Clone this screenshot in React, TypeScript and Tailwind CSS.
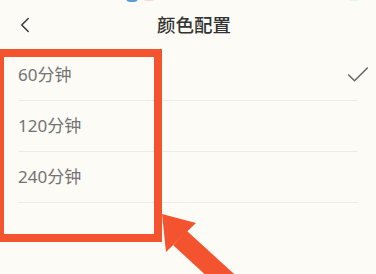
import { Check, ChevronLeft } from 'lucide-react'

const options = [
  { label: '60分钟', selected: true },
  { label: '120分钟', selected: false },
  { label: '240分钟', selected: false },
]

export default function App() {
  return (
    <div
      className="relative h-[274px] w-[376px] overflow-hidden bg-[#fdfbf6]"
      style={{ fontFamily: '"Noto Sans", "Noto Sans CJK SC", sans-serif' }}
    >
      {/* status bar remnants */}
      <div className="absolute left-[126px] top-[-6px] h-[8px] w-[12px] rounded-full bg-[#5a9ad6]" />
      <div className="absolute left-[143px] top-[-6px] h-[7px] w-[12px] rounded-full bg-[#f7dadc]" />
      <div className="absolute left-[348px] top-[-6px] h-[7px] w-[12px] rounded-full bg-[#e6f6e1]" />

      <header className="flex h-[50px] items-center px-[12px]">
        <ChevronLeft className="h-[26px] w-[26px] text-[#333]" strokeWidth={1.3} />
        <h1 className="flex-1 pr-[24px] pl-[10px] text-center text-[18.5px] font-medium text-[#333]">
          颜色配置
        </h1>
      </header>

      <ul className="px-[18px]">
        {options.map((o) => (
          <li
            key={o.label}
            className="flex h-[51px] items-center justify-between border-b border-[#efece6]"
          >
            <span className="text-[17px] text-[#737373]">{o.label}</span>
            {o.selected && <Check className="mr-[-14px] h-[28px] w-[28px] text-[#666]" strokeWidth={1.3} />}
          </li>
        ))}
      </ul>

      {/* annotation: red highlight box */}
      <div className="absolute left-[-4px] top-[49px] h-[193px] w-[166px] border-[8px] border-[#f4532f]" />

      {/* annotation: arrow */}
      <svg className="absolute left-0 top-0" width="376" height="274" viewBox="0 0 376 274">
        <line x1="180" y1="238" x2="228" y2="282" stroke="#f4532f" strokeWidth="20" />
        <polygon points="162,214 196,223 166,252" fill="#f4532f" />
      </svg>
    </div>
  )
}
